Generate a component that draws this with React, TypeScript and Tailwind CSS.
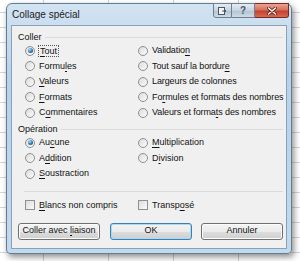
import type { ReactNode } from "react";

function Label({ text, u }: { text: string; u?: number }) {
  if (u === undefined) return <>{text}</>;
  return (
    <>
      {text.slice(0, u)}
      <span className="underline decoration-[1px] underline-offset-[1.5px]">{text[u]}</span>
      {text.slice(u + 1)}
    </>
  );
}

function Radio({ checked }: { checked?: boolean }) {
  return (
    <span className="flex h-[10px] w-[10px] shrink-0 items-center justify-center rounded-full border border-[#8e8f8f] bg-[linear-gradient(135deg,#dcdcdc,#fbfbfb)]">
      {checked && (
        <span className="h-[5px] w-[5px] rounded-full bg-[radial-gradient(circle_at_35%_30%,#a7dcff,#2b6fa8_60%,#163a5c)]" />
      )}
    </span>
  );
}

function Check() {
  return (
    <span className="h-[10px] w-[10px] shrink-0 border border-[#8e8f8f] bg-[linear-gradient(135deg,#dcdcdc,#fbfbfb)]" />
  );
}

function Option({ children, checked, focus }: { children: ReactNode; checked?: boolean; focus?: boolean }) {
  return (
    <div className="flex h-[15.5px] items-center whitespace-nowrap">
      <Radio checked={checked} />
      <span className={focus ? "ml-[3px] border border-dotted border-[#555] px-[1px] leading-[10px]" : "ml-[4px]"}>
        {children}
      </span>
    </div>
  );
}

function GroupHeader({ title }: { title: string }) {
  return (
    <div className="flex items-center pl-[6px] pr-[3px]">
      <span>{title}</span>
      <span className="ml-[3px] h-px flex-1 bg-[#dadada]" />
    </div>
  );
}

function Button({ children, primary }: { children: ReactNode; primary?: boolean }) {
  return (
    <div
      className={
        "flex h-[17px] w-[82px] items-center justify-center whitespace-nowrap rounded-[3px] border bg-[linear-gradient(#f4f4f4_0%,#ebebeb_50%,#dddddd_51%,#cfcfcf_100%)] " +
        (primary ? "border-[#3c7fb1] shadow-[inset_0_0_0_1px_#a9dbf6]" : "border-[#707070] shadow-[inset_0_0_0_1px_#fcfcfc]")
      }
    >
      <span>{children}</span>
    </div>
  );
}

export default function App() {
  return (
    <div className="relative h-[261px] w-[300px] overflow-hidden bg-white bg-[linear-gradient(to_right,#cfcfcf_1px,transparent_1px),linear-gradient(to_bottom,#d6d6d6_1px,transparent_1px)] [background-position:43px_12px] [background-size:65px_15px] font-['Liberation_Sans',Arial,sans-serif] text-[9px] text-[#111]">
      <div className="absolute left-[6px] top-[3px] flex h-[251px] w-[286px] flex-col rounded-t-[6px] rounded-b-[4px] border border-[#5f7d97] bg-[linear-gradient(#d2e3f2,#b9d2e8_30%,#c3d9ec)] shadow-[2px_3px_6px_rgba(0,0,0,0.45)]">
        {/* title bar */}
        <div className="relative flex h-[21px] items-center pl-[5px]">
          <span className="text-[10px] text-[#1b1b1b]">Collage spécial</span>
          <div className="absolute right-[2px] top-[-1px] flex h-[15px]">
            <div className="flex w-[19px] items-center justify-center rounded-bl-[3px] border border-[#6f7f8f] bg-[linear-gradient(#e4ecf4,#c6d3e0_50%,#b2c2d2_51%,#cfdbe7)]">
              <svg width="9" height="8" viewBox="0 0 9 8">
                <rect x="0.5" y="0.5" width="6" height="7" fill="#f4f4f4" stroke="#4a5866" />
                <path d="M4 4h4M6.5 2.5L8 4L6.5 5.5" fill="none" stroke="#4a5866" strokeWidth="1" />
              </svg>
            </div>
            <div className="flex w-[23px] items-center justify-center border-y border-r border-[#6f7f8f] bg-[linear-gradient(#e4ecf4,#c6d3e0_50%,#b2c2d2_51%,#cfdbe7)] text-[10px] font-bold text-[#4a5866]">
              ?
            </div>
            <div className="flex w-[34px] items-center justify-center rounded-br-[3px] border-y border-r border-[#7a2a22] bg-[linear-gradient(#e8a493,#d8705c_45%,#c4422e_55%,#d46a4f)]">
              <svg width="10" height="8" viewBox="0 0 10 8">
                <path d="M1.5 1L8.5 7M8.5 1L1.5 7" stroke="#5a1d16" strokeWidth="3" strokeLinecap="round" />
                <path d="M1.5 1L8.5 7M8.5 1L1.5 7" stroke="#ffffff" strokeWidth="1.6" strokeLinecap="round" />
              </svg>
            </div>
          </div>
        </div>
        {/* client area */}
        <div className="mx-[4px] mb-[4px] flex h-[224px] flex-col border border-[#8aa2b8] bg-[#f0f0f0] pt-[5px]">
          <div className="h-[12px] leading-[12px]">
            <GroupHeader title="Coller" />
          </div>
          <div className="grid grid-cols-[113px_1fr] pl-[13px]">
            <div className="flex flex-col">
              <Option checked focus>
                <Label text="Tout" u={0} />
              </Option>
              <Option>
                <Label text="Formules" u={5} />
              </Option>
              <Option>
                <Label text="Valeurs" u={0} />
              </Option>
              <Option>
                <Label text="Formats" u={0} />
              </Option>
              <Option>
                <Label text="Commentaires" u={1} />
              </Option>
            </div>
            <div className="flex flex-col tracking-[-0.1px]">
              <Option>
                <Label text="Validation" u={9} />
              </Option>
              <Option>
                <Label text="Tout sauf la bordure" u={19} />
              </Option>
              <Option>
                <Label text="Largeurs de colonnes" />
              </Option>
              <Option>
                <Label text="Formules et formats des nombres" u={2} />
              </Option>
              <Option>
                <Label text="Valeurs et formats des nombres" u={16} />
              </Option>
            </div>
          </div>
          <div className="mt-[3.5px] h-[11px] leading-[11px]">
            <GroupHeader title="Opération" />
          </div>
          <div className="grid grid-cols-[113px_1fr] pl-[13px]">
            <div className="flex flex-col">
              <Option checked>
                <Label text="Aucune" u={2} />
              </Option>
              <Option>
                <Label text="Addition" u={1} />
              </Option>
              <Option>
                <Label text="Soustraction" u={0} />
              </Option>
            </div>
            <div className="flex flex-col">
              <Option>
                <Label text="Multiplication" u={0} />
              </Option>
              <Option>
                <Label text="Division" u={1} />
              </Option>
            </div>
          </div>
          <div className="ml-[12px] mr-[3px] mt-[9px] h-px bg-[#dadada]" />
          <div className="mt-[7px] grid h-[12px] grid-cols-[113px_1fr] pl-[13px]">
            <div className="flex items-center">
              <Check />
              <span className="ml-[4px]">
                <Label text="Blancs non compris" u={0} />
              </span>
            </div>
            <div className="flex items-center">
              <Check />
              <span className="ml-[4px]">
                <Label text="Transposé" u={6} />
              </span>
            </div>
          </div>
          <div className="mt-[12px] flex pl-[6px]">
            <Button>
              Coller avec <Label text="liaison" u={0} />
            </Button>
            <div className="ml-[10px]">
              <Button primary>OK</Button>
            </div>
            <div className="ml-[9px]">
              <Button>Annuler</Button>
            </div>
          </div>
        </div>
      </div>
    </div>
  );
}
